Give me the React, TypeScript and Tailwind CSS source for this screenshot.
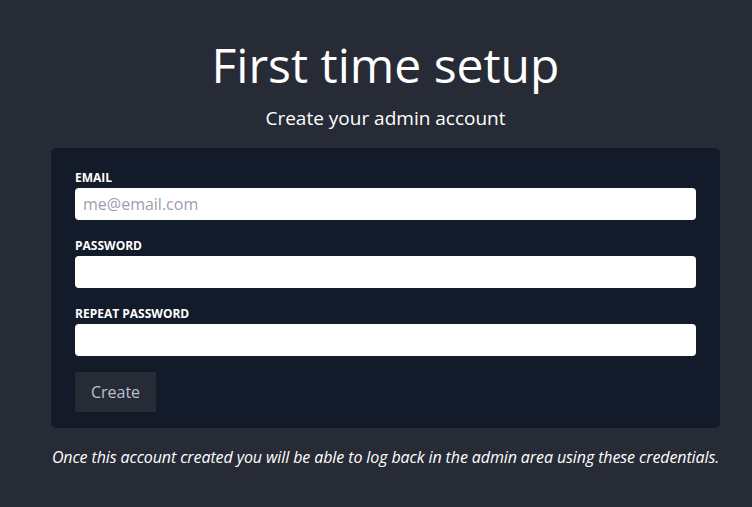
import React, { useState } from 'react';

const FONT = { fontFamily: '"Open Sans", "Noto Sans", sans-serif' };

interface FieldProps {
  label: string;
  type: string;
  value: string;
  placeholder?: string;
  onChange: (v: string) => void;
}

const Field: React.FC<FieldProps> = ({ label, type, value, placeholder, onChange }) => (
  <div className="flex flex-col">
    <label className="text-[12px] leading-[20px] font-bold uppercase text-white">{label}</label>
    <input
      type={type}
      value={value}
      placeholder={placeholder}
      onChange={(e) => onChange(e.target.value)}
      className="h-8 w-full rounded-[4px] bg-white px-2 text-[16px] text-gray-900 placeholder:text-[#9aa1ad] outline-none"
      style={FONT}
    />
  </div>
);

export default function App() {
  const [email, setEmail] = useState('');
  const [password, setPassword] = useState('');
  const [repeat, setRepeat] = useState('');

  return (
    <div className="min-h-[507px] w-full bg-[#272b36] pl-[51px] pr-[32px] pt-[37px]" style={FONT}>
      <h1 className="text-center text-[48px] leading-[56px] font-normal text-white">First time setup</h1>
      <p className="mt-[12px] text-center text-[19px] leading-[26px] text-white">Create your admin account</p>

      <form
        onSubmit={(e) => e.preventDefault()}
        className="mt-[17px] flex flex-col gap-4 rounded-[5px] bg-[#131a29] px-6 pt-5 pb-4"
      >
        <Field label="Email" type="email" value={email} placeholder="me@email.com" onChange={setEmail} />
        <Field label="Password" type="password" value={password} onChange={setPassword} />
        <Field label="Repeat password" type="password" value={repeat} onChange={setRepeat} />
        <div>
          <button
            type="submit"
            className="h-10 w-[81px] rounded-[2px] bg-[#272b36] text-[16px] text-[#b9c2cf]"
            style={FONT}
          >
            Create
          </button>
        </div>
      </form>

      <p className="mt-[17px] whitespace-nowrap text-center text-[16px] leading-[24px] italic tracking-[-0.1px] text-white">
        Once this account created you will be able to log back in the admin area using these credentials.
      </p>
    </div>
  );
}
